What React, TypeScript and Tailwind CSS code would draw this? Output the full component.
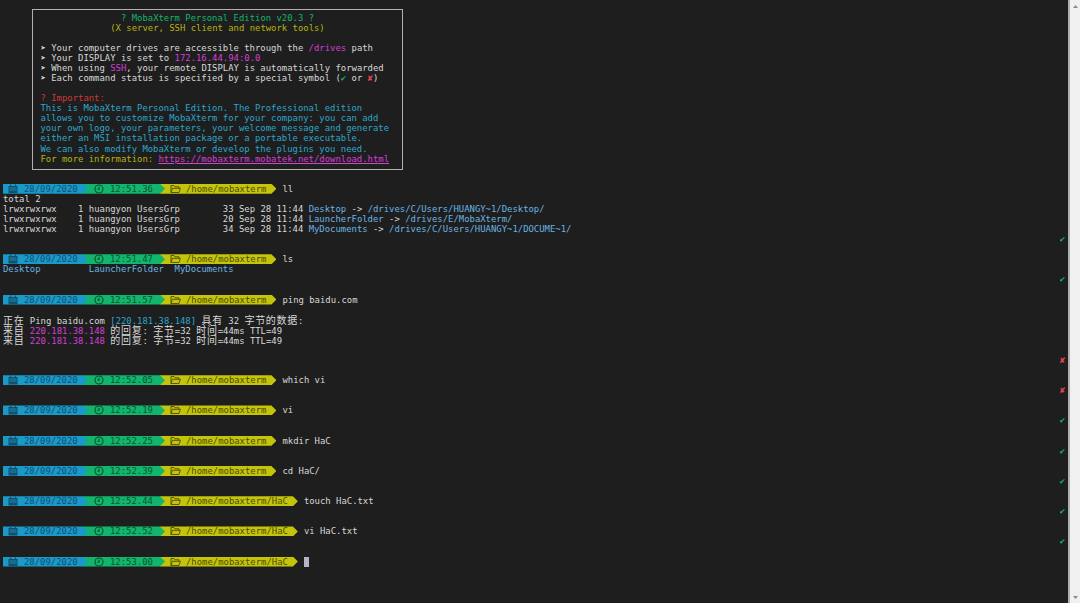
import React from "react";

const arrow = "[clip-path:polygon(0_0,calc(100%-5px)_0,100%_50%,calc(100%-5px)_100%,0_100%)]";

function Line({ children, mark }: { children?: React.ReactNode; mark?: "ok" | "bad" }) {
  return (
    <div className="flex justify-between h-[10.08px] leading-[10.08px] whitespace-pre">
      <span>{children}</span>
      {mark === "ok" && <span className="text-[#12b56c] font-bold">✔</span>}
      {mark === "bad" && <span className="text-[#e5484d] font-bold">✘</span>}
    </div>
  );
}

function CalendarIcon() {
  return (
    <svg width="10" height="10" viewBox="0 0 10 10" className="text-[#14506e]">
      <path d="M0.5 2h9v7.5h-9z M2 0.5h1.2v2H2z M6.8 0.5H8v2H6.8z" fill="currentColor" />
      <path d="M1.5 4h7 M1.5 6h7" stroke="#1a9ac8" strokeWidth="0.8" />
    </svg>
  );
}

function ClockIcon() {
  return (
    <svg width="10" height="10" viewBox="0 0 10 10" fill="none" stroke="#0a4a30" strokeWidth="1.1">
      <circle cx="5" cy="5" r="4" />
      <path d="M5 2.8V5.3H3.4" />
    </svg>
  );
}

function FolderIcon() {
  return (
    <svg width="11" height="10" viewBox="0 0 11 10" fill="none" stroke="#4d4d08" strokeWidth="0.9">
      <path d="M1 8.5V1.5h3l1 1.3h4v1.5" />
      <path d="M1 8.5l1.4-4.2h8L9 8.5z" />
    </svg>
  );
}

function Prompt({ date = "28/09/2020", time, path = "/home/mobaxterm", cmd, cursor }: { date?: string; time: string; path?: string; cmd?: string; cursor?: boolean }) {
  return (
    <div className="flex items-center h-[10.08px] leading-[10.08px] whitespace-pre pl-[3px]">
      <div className={`relative z-30 flex items-center shrink-0 w-[85px] h-[10px] bg-[#1a9ac8] text-[#124f70] pl-[5px] ${arrow}`}>
        <CalendarIcon />
        <span className="ml-[6px]">{date}</span>
      </div>
      <div className={`relative z-20 flex items-center shrink-0 w-[82px] h-[10px] -ml-[5px] bg-[#12b56c] text-[#0a5233] pl-[11px] ${arrow}`}>
        <ClockIcon />
        <span className="ml-[6px]">{time}</span>
      </div>
      <div className={`relative z-10 flex items-center shrink-0 h-[10px] -ml-[5px] bg-[#c4c40a] text-[#4d4d08] pl-[10px] pr-[10px] ${arrow}`}>
        <FolderIcon />
        <span className="ml-[5px]">{path}</span>
      </div>
      {cmd && <span className="ml-[6px] text-[#d8d8d8]">{cmd}</span>}
      {cursor && <span className="ml-[6px] w-[5px] h-[10px] bg-[#b4b4c8]" />}
    </div>
  );
}

const Cjk = ({ children }: { children: React.ReactNode }) => (
  <span className="inline-block h-[10.08px] font-['Noto_Sans_CJK_SC',sans-serif] text-[10px] tracking-[0.74px] leading-[10.08px]">{children}</span>
);

const Pink = ({ children }: { children: React.ReactNode }) => <span className="text-[#d43fd4]">{children}</span>;
const Blue = ({ children }: { children: React.ReactNode }) => <span className="text-[#2ca6cc]">{children}</span>;

function WelcomeBox() {
  return (
    <div className="ml-[32px] w-[371px] h-[161px] border border-[#b0b0b0] pt-[3px] text-[#d8d8d8]">
      <div className="text-center leading-[10.08px] text-[#12b56c]">? MobaXterm Personal Edition v20.3 ?</div>
      <div className="text-center leading-[10.08px] text-[#b4b40e]">(X server, SSH client and network tools)</div>
      <div className="pl-[7.5px]">
        <Line />
        <Line>➤ Your computer drives are accessible through the <Pink>/drives</Pink> path</Line>
        <Line>➤ Your DISPLAY is set to <Pink>172.16.44.94:0.0</Pink></Line>
        <Line>➤ When using <Pink>SSH</Pink>, your remote DISPLAY is automatically forwarded</Line>
        <Line>➤ Each command status is specified by a special symbol (<span className="text-[#12b56c]">✔</span> or <span className="text-[#e5484d]">✘</span>)</Line>
        <Line />
        <Line><span className="text-[#cc3a3a]">? Important:</span></Line>
        <Line><Blue>This is MobaXterm Personal Edition. The Professional edition</Blue></Line>
        <Line><Blue>allows you to customize MobaXterm for your company: you can add</Blue></Line>
        <Line><Blue>your own logo, your parameters, your welcome message and generate</Blue></Line>
        <Line><Blue>either an MSI installation package or a portable executable.</Blue></Line>
        <Line><Blue>We can also modify MobaXterm or develop the plugins you need.</Blue></Line>
        <Line>
          <span className="text-[#b4b40e]">For more information: </span>
          <span className="text-[#d43fd4] underline">https://mobaxterm.mobatek.net/download.html</span>
        </Line>
      </div>
    </div>
  );
}

const Link = ({ children }: { children: React.ReactNode }) => <span className="text-[#69b4e4]">{children}</span>;

export default function App() {
  return (
    <div className="flex w-[1080px] h-[603px] overflow-hidden bg-[#1e1e1e] font-['DejaVu_Sans_Mono',monospace] text-[8.92px] text-[#d8d8d8]">
      <main className="flex-1 pt-[8.5px] pr-[3px]">
        <WelcomeBox />
        <div className="mt-[14.2px]">
          <Prompt time="12:51.36" cmd="ll" />
          <div className="pl-[3px]">
            <Line>total 2</Line>
            <Line>lrwxrwxrwx    1 huangyon UsersGrp        33 Sep 28 11:44 <Link>Desktop</Link> -&gt; <Link>/drives/C/Users/HUANGY~1/Desktop/</Link></Line>
            <Line>lrwxrwxrwx    1 huangyon UsersGrp        20 Sep 28 11:44 <Link>LauncherFolder</Link> -&gt; <Link>/drives/E/MobaXterm/</Link></Line>
            <Line>lrwxrwxrwx    1 huangyon UsersGrp        34 Sep 28 11:44 <Link>MyDocuments</Link> -&gt; <Link>/drives/C/Users/HUANGY~1/DOCUME~1/</Link></Line>
            <Line mark="ok" />
            <Line />
          </div>
          <Prompt time="12:51.47" cmd="ls" />
          <div className="pl-[3px]">
            <Line><Link>Desktop         LauncherFolder  MyDocuments</Link></Line>
            <Line mark="ok" />
            <Line />
          </div>
          <Prompt time="12:51.57" cmd="ping baidu.com" />
          <div className="pl-[3px]">
            <Line />
            <Line><Cjk>正在</Cjk> Ping baidu.com <span className="text-[#2ca6cc]">[220.181.38.148]</span> <Cjk>具有</Cjk> 32 <Cjk>字节的数据</Cjk>:</Line>
            <Line><Cjk>来自</Cjk> <Pink>220.181.38.148</Pink> <Cjk>的回复</Cjk>: <Cjk>字节</Cjk>=32 <Cjk>时间</Cjk>=44ms TTL=49</Line>
            <Line><Cjk>来自</Cjk> <Pink>220.181.38.148</Pink> <Cjk>的回复</Cjk>: <Cjk>字节</Cjk>=32 <Cjk>时间</Cjk>=44ms TTL=49</Line>
            <Line />
            <Line mark="bad" />
            <Line />
          </div>
          <Prompt time="12:52.05" cmd="which vi" />
          <div className="pl-[3px]">
            <Line mark="bad" />
            <Line />
          </div>
          <Prompt time="12:52.19" cmd="vi" />
          <div className="pl-[3px]">
            <Line mark="ok" />
            <Line />
          </div>
          <Prompt time="12:52.25" cmd="mkdir HaC" />
          <div className="pl-[3px]">
            <Line mark="ok" />
            <Line />
          </div>
          <Prompt time="12:52.39" cmd="cd HaC/" />
          <div className="pl-[3px]">
            <Line mark="ok" />
            <Line />
          </div>
          <Prompt time="12:52.44" path="/home/mobaxterm/HaC" cmd="touch HaC.txt" />
          <div className="pl-[3px]">
            <Line mark="ok" />
            <Line />
          </div>
          <Prompt time="12:52.52" path="/home/mobaxterm/HaC" cmd="vi HaC.txt" />
          <div className="pl-[3px]">
            <Line mark="ok" />
            <Line />
          </div>
          <Prompt time="12:53.00" path="/home/mobaxterm/HaC" cursor />
        </div>
      </main>
      <aside className="flex flex-col justify-between items-center w-[12px] shrink-0 bg-[#f0f0f0] border-l-2 border-[#b0b0b0] pt-[5px] pb-[4px]">
        <svg width="5" height="3" viewBox="0 0 5 3"><path d="M2.5 0L5 3H0z" fill="#8a8a8a" /></svg>
        <svg width="5" height="3" viewBox="0 0 5 3"><path d="M0 0h5L2.5 3z" fill="#8a8a8a" /></svg>
      </aside>
    </div>
  );
}
